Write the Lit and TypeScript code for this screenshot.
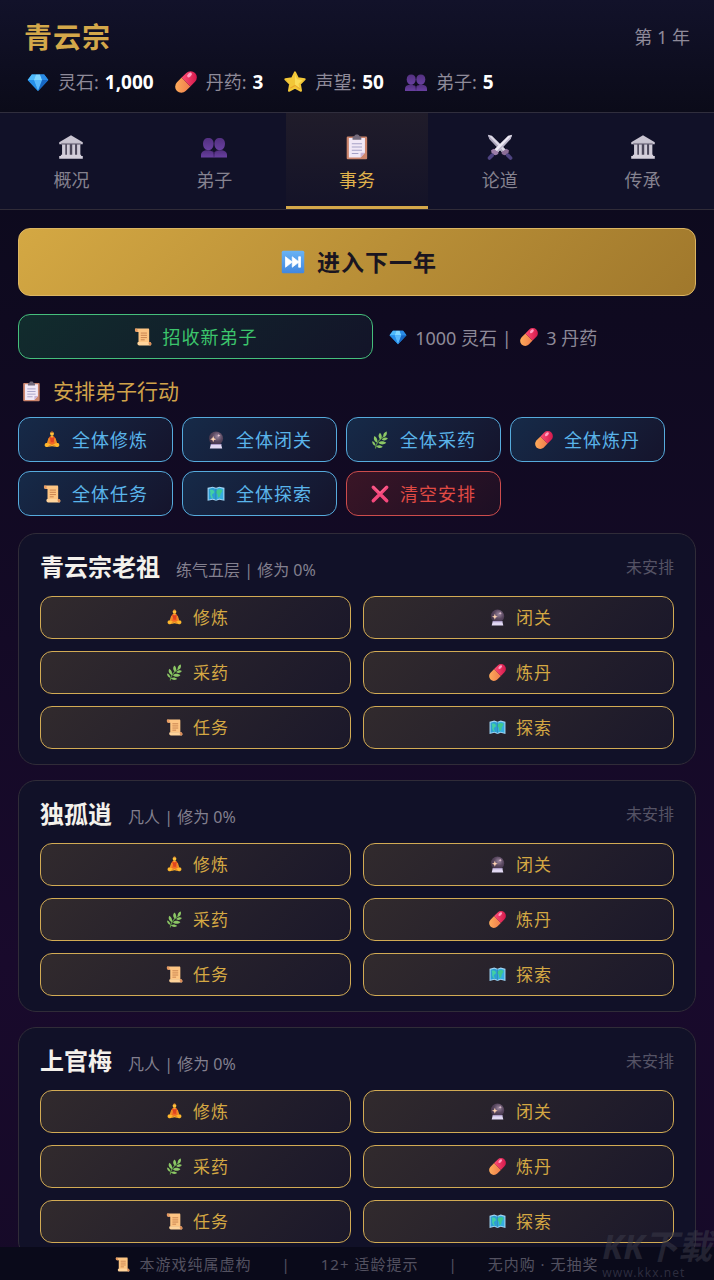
import { LitElement, html, css, svg } from "lit";
import { customElement, property, state } from "lit/decorators.js";

type IconName =
  | "gem" | "pill" | "star" | "people" | "temple" | "clipboard" | "swords"
  | "next" | "scroll" | "lotus" | "crystal" | "herb" | "map" | "cross";

const ICONS: Record<IconName, unknown> = {
  gem: svg`
    <path d="M7 5h18l6 8-15 16L1 13z" fill="#2f9bf0"/>
    <path d="M7 5h6l-3 8H1z" fill="#4db9fa"/>
    <path d="M13 5h6l3 8H10z" fill="#7fd6ff"/>
    <path d="M19 5h6l6 8h-9z" fill="#2a8be6"/>
    <path d="M10 13h12l-6 16z" fill="#58b8fb"/>
    <path d="M22 13h9L16 29z" fill="#1767c4"/>
    <path d="M1 13h9l6 16z" fill="#258ee8"/>`,
  pill: svg`
    <defs>
      <linearGradient id="pr" x1="0" y1="0" x2="1" y2="1"><stop offset="0" stop-color="#ff4f74"/><stop offset="1" stop-color="#cc1046"/></linearGradient>
      <linearGradient id="py" x1="0" y1="0" x2="1" y2="1"><stop offset="0" stop-color="#ffb35c"/><stop offset="1" stop-color="#f07c4c"/></linearGradient>
    </defs>
    <g transform="translate(16 16) rotate(-45) scale(1.2) translate(-16 -16)">
      <path d="M16 8.500H8a7.500 7.500 0 0 0 0 15h8z" fill="url(#py)"/>
      <path d="M16 8.500h8a7.500 7.500 0 0 1 0 15h-8z" fill="url(#pr)"/>
      <ellipse cx="25" cy="13" rx="3.500" ry="2" fill="#ff9fc2"/>
    </g>`,
  star: svg`
    <path d="M16 2l4.300 8.700 9.700 1.300-7 6.900 1.700 9.800L16 24l-8.700 4.700L9 18.900 2 12l9.700-1.300z" fill="#f2c738" stroke="#f2c738" stroke-width="3" stroke-linejoin="round"/>
    <path d="M16 5l3 7 8 1.500-6 5 1.500 7L16 21z" fill="#fbdc58"/>
    <path d="M9 25l7-4 7 5" fill="none" stroke="#e9a62c" stroke-width="1.500"/>`,
  people: svg`
    <defs><linearGradient id="pp" x1="0" y1="0" x2="0" y2="1"><stop offset="0" stop-color="#533080"/><stop offset="1" stop-color="#6840a0"/></linearGradient></defs>
    <g fill="url(#pp)">
      <path d="M9 5c4 0 6.500 2.500 6.500 7S13 20 9 20s-6.500-3.500-6.500-8S5 5 9 5z"/>
      <path d="M23 5c4 0 6.500 2.500 6.500 7S27 20 23 20s-6.500-3.500-6.500-8S19 5 23 5z"/>
      <path d="M0 29v-3c0-4 3-6 8-6s8 2 8 6v3z"/>
      <path d="M16 29v-3c0-4 3-6 8-6s8 2 8 6v3z"/>
    </g>
    <path d="M16 28v-3c0-2-1-3.500-2.500-4.300M16 25c.5-2.500 1.500-3.700 3-4.500" fill="none" stroke="#43256b" stroke-width="1.200"/>`,
  temple: svg`
    <path d="M16 1.500L30.500 10v2.500h-29V10z" fill="#c9c4d1"/>
    <path d="M4 11h24v1.800H4z" fill="#8d8798"/>
    <path d="M6 13h20v13H6z" fill="#4b4659"/>
    <g fill="#cfcad7"><path d="M5 13h4v13H5zM11 13h3.500v13H11zM17.500 13H21v13h-3.500zM23.500 13h4v13h-4z"/></g>
    <path d="M3.500 25.500h25v2h-25zM1.500 27h29v3.500h-29z" fill="#d5d0dc"/>`,
  clipboard: svg`
    <g transform="translate(1.500 0) scale(.9 1)">
      <rect x="2" y="3" width="28" height="28" rx="1.500" fill="#cc856c"/>
      <path d="M5 5h22v18l-6 6H5z" fill="#f1e8f6"/>
      <path d="M27 23l-6 6v-6z" fill="#c9b3d6"/>
      <path d="M10 7V4.500C10 3.500 11 3 12.500 3c0-3 7-3 7 0 1.500 0 2.500.5 2.500 1.500V7z" fill="#746b7c"/>
      <path d="M9 12h14M9 16h14M9 20h14M9 24h9" stroke="#a6a1c6" stroke-width="1.500"/>
    </g>`,
  swords: svg`
    <path d="M1 1l5 1 18 18-4 4L3 6z" fill="#dcd8e6"/>
    <path d="M1 1l2 5 17 18 1.500-1.500z" fill="#aaa4ba"/>
    <path d="M18 24c3 4 9 2 9-4l-3-2-6 4z" fill="#8b6d96"/>
    <path d="M25.500 26l3.500 3.500" stroke="#4e4380" stroke-width="4.500" stroke-linecap="round"/>
    <path d="M31 1l-5 1L8 20l4 4L29 6z" fill="#eeeaf5"/>
    <path d="M31 1l-2 5-17 18-1.500-1.500z" fill="#bdb7cc"/>
    <path d="M14 24c-3 4-9 2-9-4l3-2 6 4z" fill="#9c7ea8"/>
    <path d="M6.500 26L3 29.500" stroke="#4e4380" stroke-width="4.500" stroke-linecap="round"/>`,
  next: svg`
    <defs><linearGradient id="nx" x1="0" y1="0" x2="0" y2="1"><stop offset="0" stop-color="#69b3f4"/><stop offset="1" stop-color="#4187df"/></linearGradient></defs>
    <rect x="1" y="1" width="30" height="30" rx="2" fill="url(#nx)"/>
    <path d="M6 9l9 7-9 7zM15 9l9 7-9 7zM23.500 9H26v14h-2.500z" fill="#fff" stroke="#fff" stroke-linejoin="round"/>`,
  scroll: svg`
    <path d="M3 1h22c2 0 2 1 2 3v22H8V7H5C1 7 1 2 3 1z" fill="#fdc583"/>
    <path d="M3 1c3 0 4 2 3.500 6H4C1 6 1 1 3 1z" fill="#e89a62"/>
    <path d="M7 25h21c3 0 4 6 1 6H9c-3 0-4-4-2-6z" fill="#ffd49b"/>
    <path d="M27 25c-2 1-1 6 2 6 3-1 2-6-1-6z" fill="#dc8c58"/>
    <path d="M12 9h11M12 13h11M12 17h11M12 21h7" stroke="#c7804e" stroke-width="1.700"/>`,
  lotus: svg`
    <path d="M10 18c0-7 2-9 6-9s6 2 6 9l1 8H9z" fill="#f46a25"/>
    <path d="M10 12L6 24l4 2 3-11zM22 12l4 12-4 2-3-11z" fill="#ee8a25"/>
    <path d="M12 10c2 3 6 3 8 0l-1 10h-5z" fill="#e04420"/>
    <path d="M4 22c4-2 8 2 12 2s8-4 12-2c3 4-1 8-5 6l-7-1-7 1c-4 2-8-2-5-6z" fill="#ffb82d"/>
    <path d="M10 27l6-3 6 3" fill="none" stroke="#db7a20" stroke-width="1.500"/>
    <circle cx="16" cy="5" r="3.500" fill="#ffc13b"/>
    <path d="M14 8h4v3h-4z" fill="#f5ae30"/>
    <path d="M13 3.500c1-4 5-4 6 0l-3-1z" fill="#9c5a2a"/>`,
  crystal: svg`
    <defs><radialGradient id="cb" cx=".6" cy=".35" r=".7"><stop offset="0" stop-color="#9a879f"/><stop offset=".5" stop-color="#59475f"/><stop offset="1" stop-color="#3e3146"/></radialGradient></defs>
    <circle cx="16" cy="13.500" r="12.500" fill="url(#cb)"/>
    <path d="M7 23h18l2 8H5z" fill="#e2d9f3"/>
    <path d="M7 23h18l1 2H7z" fill="#aa9ac8"/>
    <path d="M11 9l1.500 4 4 1.500-4 1.500-1.500 4-1.500-4-4-1.500 4-1.500z" fill="#ffd5b4"/>
    <path d="M21 5l.8 2.200L24 8l-2.200.8L21 11l-.8-2.200L18 8l2.200-.8z" fill="#e7c6d2"/>`,
  herb: svg`
    <path d="M8 31c0-9 6-16 17-23" fill="none" stroke="#5e9945" stroke-width="2"/>
    <g fill="#8cc765">
      <path d="M22 11c-1-6 2-9 6-10 1 6-1 9-6 10z"/>
      <path d="M17 15c-5-4-4-9-1-12 4 4 4 8 1 12z"/>
      <path d="M11 21C5 18 4 14 6 9c5 3 6 7 5 12z"/>
      <path d="M19 15c4-4 8-4 11-2-3 4-7 5-11 2z"/>
      <path d="M13 21c5-4 10-3 14 0-4 4-10 4-14 0z"/>
      <path d="M9 27c5-3 8-2 12 1-4 3-8 3-12-1z"/>
      <path d="M8 26c-4-1-6-4-6-8 4 1 6 4 6 8z"/>
    </g>`,
  map: svg`
    <path d="M1 5l9-2 6 2 6-2 9 2v23l-9-2-6 2-6-2-9 2z" fill="#9fd4f3"/>
    <path d="M3 7l7-2 6 2v19l-6-2-7 2z" fill="#2d9ed4"/>
    <path d="M16 7l6-2 7 2v19l-7-2-6 2z" fill="#35aee0"/>
    <path d="M5 9c4-1 7 0 8 3s-4 3-4 6 3 3 1 5-3-3-4-5 1-3 0-5z" fill="#42cfa4"/>
    <path d="M17 10c3-3 7-3 10-1 1 4-2 4-3 7s0 5-3 6-1-5-3-6-3-4-1-6z" fill="#3fc88f"/>
    <path d="M16 6v21" stroke="#217aa9" stroke-width="1.200"/>`,
  cross: svg`
    <path d="M4 4l24 24M28 4L4 28" stroke="#f4487c" stroke-width="6" stroke-linecap="round"/>
    <path d="M4 3l12 11L27 3" fill="none" stroke="#ff7596" stroke-width="1.500" stroke-linecap="round"/>`,
};

@customElement("game-icon")
class GameIcon extends LitElement {
  @property() name: IconName = "gem";

  static styles = css`
    :host { display: inline-flex; width: 1em; height: 1em; flex: none; }
    .glyph { display: block; width: 100%; height: 100%; overflow: visible; }
  `;

  render() {
    return html`<svg class="glyph" viewBox="0 0 32 32" aria-hidden="true">${ICONS[this.name]}</svg>`;
  }
}

interface Action { icon: IconName; label: string; }

const ACTIONS: Action[] = [
  { icon: "lotus", label: "修炼" },
  { icon: "crystal", label: "闭关" },
  { icon: "herb", label: "采药" },
  { icon: "pill", label: "炼丹" },
  { icon: "scroll", label: "任务" },
  { icon: "map", label: "探索" },
];

@customElement("disciple-card")
class DiscipleCard extends LitElement {
  @property() name = "";
  @property() realm = "";

  static styles = css`
    :host {
      display: block;
      padding: 15px 21px;
      border: 1px solid #302c38;
      border-radius: 18px;
      background: #111128;
    }
    .head { display: flex; align-items: center; margin-bottom: 11px; }
    .who { display: flex; align-items: baseline; gap: 16px; flex: 1; }
    .name { margin: 0; font-size: 24px; font-weight: 700; line-height: 36px; color: #f4f1ec; }
    .realm { font-size: 16px; line-height: 20px; color: #83808f; }
    .status { font-size: 16px; line-height: 32px; color: #555365; }
    .actions { display: grid; grid-template-columns: 1fr 1fr; gap: 12px; }
    .action {
      display: flex;
      align-items: center;
      justify-content: center;
      gap: 10px;
      padding: 8px 12px 8px 16px;
      border: 1px solid #d2ab54;
      border-radius: 12px;
      background: linear-gradient(135deg, #312a2d, #1b182a);
      color: #d4a843;
      font: inherit;
      font-size: 17px;
      line-height: 25px;
      letter-spacing: 1px;
      cursor: pointer;
    }
  `;

  render() {
    return html`
      <div class="head">
        <div class="who">
          <h3 class="name">${this.name}</h3>
          <span class="realm">${this.realm} | 修为 0%</span>
        </div>
        <span class="status">未安排</span>
      </div>
      <div class="actions">
        ${ACTIONS.map((a) => html`
          <button class="action" type="button"><game-icon name=${a.icon}></game-icon>${a.label}</button>`)}
      </div>`;
  }
}

@customElement("app-root")
class AppRoot extends LitElement {
  @state() private tab = "事务";

  private stats: { icon: IconName; label: string; value: string }[] = [
    { icon: "gem", label: "灵石", value: "1,000" },
    { icon: "pill", label: "丹药", value: "3" },
    { icon: "star", label: "声望", value: "50" },
    { icon: "people", label: "弟子", value: "5" },
  ];

  private tabs: Action[] = [
    { icon: "temple", label: "概况" },
    { icon: "people", label: "弟子" },
    { icon: "clipboard", label: "事务" },
    { icon: "swords", label: "论道" },
    { icon: "temple", label: "传承" },
  ];

  private disciples = [
    { name: "青云宗老祖", realm: "练气五层" },
    { name: "独孤逍", realm: "凡人" },
    { name: "上官梅", realm: "凡人" },
  ];

  static styles = css`
    :host {
      display: flex;
      flex-direction: column;
      height: 100vh;
      position: relative;
      overflow: hidden;
      background: linear-gradient(180deg, #0a0a1a, #190a2c 75%, #160a28);
      color: #8e8a99;
      font-family: "Noto Sans", "Noto Sans CJK SC", sans-serif;
      font-size: 18px;
    }
    .header {
      padding: 18px 24px 16px;
      border-bottom: 1px solid #302e3d;
      background: linear-gradient(180deg, #12122a, #0b0b19);
    }
    .title-row { display: flex; align-items: center; justify-content: space-between; margin-bottom: 12px; line-height: 38px; }
    .title { margin: 0; font-size: 28px; font-weight: 700; letter-spacing: 1px; color: #d4a84a; }
    .stats { display: flex; flex-wrap: wrap; gap: 18px; line-height: 28px; }
    .stat { display: flex; align-items: center; gap: 6px; }
    .stat-icon { width: 22px; height: 22px; margin: 0 3px; }
    .value { font-size: 19px; font-weight: 700; color: #fff; }
    .tabs { display: grid; grid-template-columns: repeat(5, 1fr); background: #111128; border-bottom: 1px solid #302c38; }
    .tab {
      display: flex;
      flex-direction: column;
      align-items: center;
      gap: 7px;
      padding: 21px 0 13px;
      border: 0;
      border-bottom: 3px solid transparent;
      background: none;
      color: #85828f;
      font: inherit;
      line-height: 26px;
      cursor: pointer;
    }
    .tab.active { border-bottom-color: #d4a84a; background: linear-gradient(180deg, #201c2a, #141328); color: #e0b34c; }
    .tab-icon { width: 26px; height: 26px; }
    .main { flex: 1; min-height: 0; padding: 18px; overflow-y: auto; scrollbar-width: none; }
    .btn {
      display: flex;
      align-items: center;
      justify-content: center;
      gap: 11px;
      border: 1px solid;
      border-radius: 12px;
      font: inherit;
      letter-spacing: 1px;
      line-height: 26px;
      padding: 9px 20px 8px;
      cursor: pointer;
    }
    .advance {
      width: 100%;
      gap: 12px;
      padding: 16px 20px 16px 24px;
      border-color: #dcb562;
      background: linear-gradient(135deg, #d4a843, #a0782c);
      color: #1a1520;
      font-size: 23px;
      font-weight: 700;
      line-height: 34px;
    }
    .advance-icon { width: 24px; height: 24px; }
    .recruit-row { display: grid; grid-template-columns: 8fr 7fr; gap: 12px; align-items: center; margin: 18px 0 16px; }
    .recruit { border-color: #45bf7c; background: linear-gradient(135deg, #112c2d, #131429); color: #3cc56c; }
    .cost { display: flex; align-items: center; }
    .cost-icon { width: 18px; height: 18px; margin: 0 8px 0 4px; }
    .subtitle { display: flex; align-items: center; gap: 11px; margin: 0 3px 10px; font-size: 21px; font-weight: 400; line-height: 32px; color: #d0a34a; }
    .bulk { display: flex; flex-wrap: wrap; gap: 9px; margin-bottom: 17px; }
    .bulk .btn { width: 155px; padding-inline: 0; }
    .assign { border-color: #56abdd; background: linear-gradient(135deg, #162a48, #15142c); color: #5ab4ea; }
    .clear { border-color: #cc4c4c; background: linear-gradient(135deg, #3a1526, #1c0f24); color: #e04a44; }
    .cards { display: grid; gap: 15px; }
    .footer {
      display: flex;
      justify-content: center;
      gap: 30px;
      padding: 4px 0 3px;
      background: #0a0a1a;
      color: #535160;
      font-size: 15px;
      line-height: 26px;
      letter-spacing: 1px;
    }
    .notice { display: inline-flex; align-items: center; gap: 9px; }
    .watermark { position: absolute; right: 2px; bottom: 0; pointer-events: none; text-align: left; color: rgba(110, 110, 130, 0.35); }
    .mark-name { font-size: 34px; font-weight: 700; font-style: italic; line-height: 40px; color: rgba(60, 60, 75, 0.5); }
    .mark-site { font-size: 12px; line-height: 14px; letter-spacing: 1px; }
  `;

  render() {
    return html`
      <header class="header">
        <div class="title-row">
          <h1 class="title">青云宗</h1>
          <span>第 1 年</span>
        </div>
        <div class="stats">
          ${this.stats.map((s) => html`
            <div class="stat">
              <game-icon class="stat-icon" name=${s.icon}></game-icon>
              <span>${s.label}:</span>
              <span class="value">${s.value}</span>
            </div>`)}
        </div>
      </header>
      <nav class="tabs">
        ${this.tabs.map((t) => html`
          <button type="button" class="tab ${t.label === this.tab ? "active" : ""}" @click=${() => (this.tab = t.label)}>
            <game-icon class="tab-icon" name=${t.icon}></game-icon>
            <span>${t.label}</span>
          </button>`)}
      </nav>
      <main class="main">
        <button type="button" class="btn advance"><game-icon class="advance-icon" name="next"></game-icon>进入下一年</button>
        <div class="recruit-row">
          <button type="button" class="btn recruit"><game-icon name="scroll"></game-icon>招收新弟子</button>
          <div class="cost">
            <game-icon class="cost-icon" name="gem"></game-icon>
            <span>1000 灵石 |&nbsp;</span>
            <game-icon class="cost-icon" name="pill"></game-icon>
            <span>3 丹药</span>
          </div>
        </div>
        <h2 class="subtitle"><game-icon name="clipboard"></game-icon>安排弟子行动</h2>
        <div class="bulk">
          ${ACTIONS.map((a) => html`
            <button type="button" class="btn assign"><game-icon name=${a.icon}></game-icon>全体${a.label}</button>`)}
          <button type="button" class="btn clear"><game-icon name="cross"></game-icon>清空安排</button>
        </div>
        <div class="cards">
          ${this.disciples.map((d) => html`<disciple-card .name=${d.name} .realm=${d.realm}></disciple-card>`)}
        </div>
      </main>
      <footer class="footer">
        <span class="notice"><game-icon name="scroll"></game-icon>本游戏纯属虚构</span>
        <span>|</span>
        <span>12+ 适龄提示</span>
        <span>|</span>
        <span>无内购 · 无抽奖</span>
      </footer>
      <div class="watermark" aria-hidden="true">
        <div class="mark-name">KK下载</div>
        <div class="mark-site">www.kkx.net</div>
      </div>`;
  }
}
